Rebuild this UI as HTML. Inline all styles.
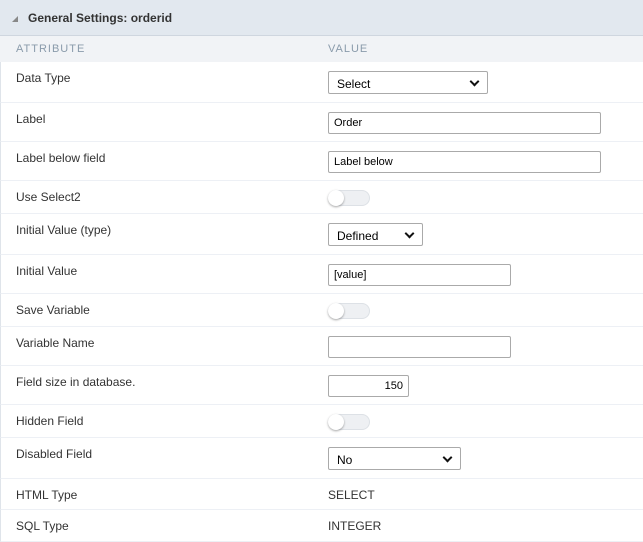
<!DOCTYPE html>
<html><head><style>
*{box-sizing:border-box;margin:0;padding:0}
body{width:643px;height:542px;background:#fff;font-family:"Liberation Sans",Arial,sans-serif;font-size:12px;color:#333;position:relative;overflow:hidden}
.hdr{position:absolute;left:0;top:0;width:643px;height:36px;background:#e2e8ef;border-bottom:1px solid #cfd6df}
.hdr span{position:absolute;left:28px;top:11px;font-weight:bold;font-size:12px;color:#333}
.tri{position:absolute;left:12px;top:16px;width:0;height:0;border-left:6px solid transparent;border-bottom:6px solid #888}
.ch{position:absolute;left:0;top:36px;width:643px;height:26px;background:#f1f3f6;color:#8a9bab;font-size:11px;letter-spacing:1px}
.ch span{position:absolute;top:7px}
.row{position:absolute;left:0;width:643px;border-bottom:1px solid #edf0f5;border-left:1px solid #dfe4ea}
.row .l{position:absolute;left:15px;top:9px}
.c{position:absolute;left:327px}
.sel{height:23px;border:1px solid #aaa;border-radius:2px;background:#fff;padding:5px 8px;font-size:12px;color:#000}
.sel:after{content:"";position:absolute;right:9px;top:6px;width:5px;height:5px;border-right:2px solid #111;border-bottom:2px solid #111;transform:rotate(45deg)}
.inp{height:22px;border:1px solid #aaa;border-radius:2px;background:#fff;padding:4px 5px;font-size:11px;color:#000}
.tg{width:42px;height:16px;border-radius:8px;background:#eef0f3;border:1px solid #dde1e6}
.tg:before{content:"";position:absolute;left:-1px;top:-1px;width:16px;height:16px;border-radius:50%;background:#fff;box-shadow:0 1px 2px rgba(0,0,0,.35)}
</style></head><body>
<div class="hdr"><div class="tri"></div><span>General Settings: orderid</span></div>
<div class="ch"><span style="left:16px">ATTRIBUTE</span><span style="left:328px">VALUE</span></div>
<div class="row" style="top:62px;height:41px"><div class="l" style="top:9px">Data Type</div><div class="c sel" style="top:9px;width:160px">Select</div></div>
<div class="row" style="top:103px;height:39px"><div class="l">Label</div><div class="c inp" style="top:9px;width:273px">Order</div></div>
<div class="row" style="top:142px;height:39px"><div class="l">Label below field</div><div class="c inp" style="top:9px;width:273px">Label below</div></div>
<div class="row" style="top:181px;height:33px"><div class="l">Use Select2</div><div class="c tg" style="top:9px"></div></div>
<div class="row" style="top:214px;height:41px"><div class="l">Initial Value (type)</div><div class="c sel" style="top:9px;width:95px">Defined</div></div>
<div class="row" style="top:255px;height:39px"><div class="l">Initial Value</div><div class="c inp" style="top:9px;width:183px">[value]</div></div>
<div class="row" style="top:294px;height:33px"><div class="l">Save Variable</div><div class="c tg" style="top:9px"></div></div>
<div class="row" style="top:327px;height:39px"><div class="l">Variable Name</div><div class="c inp" style="top:9px;width:183px"></div></div>
<div class="row" style="top:366px;height:39px"><div class="l">Field size in database.</div><div class="c inp" style="top:9px;width:81px;text-align:right">150</div></div>
<div class="row" style="top:405px;height:33px"><div class="l">Hidden Field</div><div class="c tg" style="top:9px"></div></div>
<div class="row" style="top:438px;height:41px"><div class="l">Disabled Field</div><div class="c sel" style="top:9px;width:133px">No</div></div>
<div class="row" style="top:479px;height:31px"><div class="l">HTML Type</div><div class="c" style="top:9px">SELECT</div></div>
<div class="row" style="top:510px;height:32px"><div class="l">SQL Type</div><div class="c" style="top:9px">INTEGER</div></div>
</body></html>
